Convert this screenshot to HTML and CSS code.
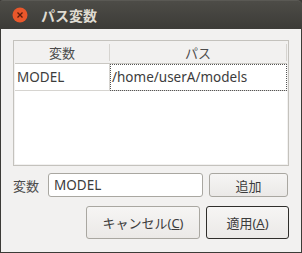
FILE: index.html
```html
<!DOCTYPE html>
<html lang="ja">
<head>
<meta charset="utf-8">
<link rel="stylesheet" href="styles.css">
</head>
<body>
<div class="window">
  <div class="titlebar">
    <span class="close"><svg width="16" height="16" viewBox="0 0 16 16"><circle cx="8" cy="8" r="7.5" fill="#e9572b"/><path d="M5.5 5.5 L10.5 10.5 M10.5 5.5 L5.5 10.5" stroke="#5a1c0c" stroke-width="1.3"/></svg></span>
    <span class="title">パス変数</span>
  </div>
  <div class="content">
    <div class="frame">
      <div class="tree">
        <div class="thead">
          <div class="th c1">変数</div>
          <div class="th c2">パス</div>
        </div>
        <div class="trow">
          <div class="td c1">MODEL</div>
          <div class="td c2 focus">/home/userA/models</div>
        </div>
      </div>
    </div>
    <div class="editrow">
      <span class="label">変数</span>
      <div class="entry">MODEL</div>
      <button class="btn add">追加</button>
    </div>
    <div class="actions">
      <button class="btn cancel">キャンセル(<u>C</u>)</button>
      <button class="btn apply">適用(<u>A</u>)</button>
    </div>
  </div>
</div>
</body>
</html>
```
FILE: styles.css
```css
* { box-sizing: border-box; }
html, body { margin: 0; padding: 0; background: #3c3b37; }
body {
  width: 302px; height: 253px; overflow: hidden;
  font-family: "Noto Sans", "Noto Sans CJK JP", sans-serif;
  font-size: 13px; color: #3c3c3c;
}
.window {
  width: 302px; height: 253px;
  background: #3c3b37;
  border-radius: 3px 5px 0 0;
  display: flex; flex-direction: column;
  padding: 0 1px 1px 1px;
}
.titlebar {
  height: 29px;
  margin: 0 -1px;
  background: linear-gradient(#4d4c47, #3c3b37);
  border-top: 1px solid #5a5954;
  border-radius: 3px 5px 0 0;
  display: flex; align-items: center;
  padding-left: 12px;
}
.close { width: 16px; height: 16px; display: flex; }
.title {
  margin-left: 13px;
  font-family: "Noto Sans CJK JP", sans-serif;
  font-weight: bold; font-size: 14px;
  color: #dfdbd2;
}
.content {
  flex: 1;
  background: #f2f1f0;
  padding: 11px 12px 0 12px;
  display: flex; flex-direction: column;
}
.frame {
  height: 126px;
  border: 1px solid #c4c2bd;
  padding: 1px;
}
.tree { height: 100%; background: #fff; display: flex; flex-direction: column; }
.thead { display: flex; height: 22px; background: #f2f1f0; border-bottom: 1px solid #c9c7c2; }
.th {
  font-family: "Noto Sans CJK JP", sans-serif;
  font-size: 13px; color: #4c4c4c;
  display: flex; align-items: center; justify-content: center;
  border-right: 1px solid #d6d4d0;
  margin: 2px 0;
}
.c1 { width: 95px; }
.c2 { flex: 1; }
.trow { display: flex; height: 27px; }
.td {
  display: flex; align-items: center;
  padding-left: 2px; color: #3c3c3c;
  font-size: 13.5px;
  border-bottom: 1px solid #d6d4d0;
}
.trow .c1 { border-right: 1px solid #d6d4d0; }
.focus { outline: 1px dotted #555; outline-offset: -1px; }
.editrow {
  display: flex; align-items: center;
  margin-top: 7px; height: 24px;
}
.label { font-family: "Noto Sans CJK JP", sans-serif; width: 35px; color: #4c4c4c; }
.entry {
  width: 155px; height: 24px;
  background: #fff;
  border: 1px solid #a9a7a1;
  border-radius: 3px;
  padding-left: 5px;
  font-size: 13.5px;
  display: flex; align-items: center;
}
.btn {
  font-family: "Noto Sans", "Noto Sans CJK JP", sans-serif;
  font-size: 13px; color: #3c3c3c;
  background: linear-gradient(#f6f5f4, #ebe9e7);
  border: 1px solid #a9a7a1;
  border-radius: 3px;
  padding: 0;
}
.add { width: 79px; height: 24px; margin-left: 6px; }
.actions {
  display: flex; justify-content: flex-end;
  margin-top: 9px; gap: 6px;
}
.cancel { width: 114px; height: 33px; }
.apply { width: 83px; height: 33px; border-color: #2f2e2b; }
u { text-decoration: underline; }
```
